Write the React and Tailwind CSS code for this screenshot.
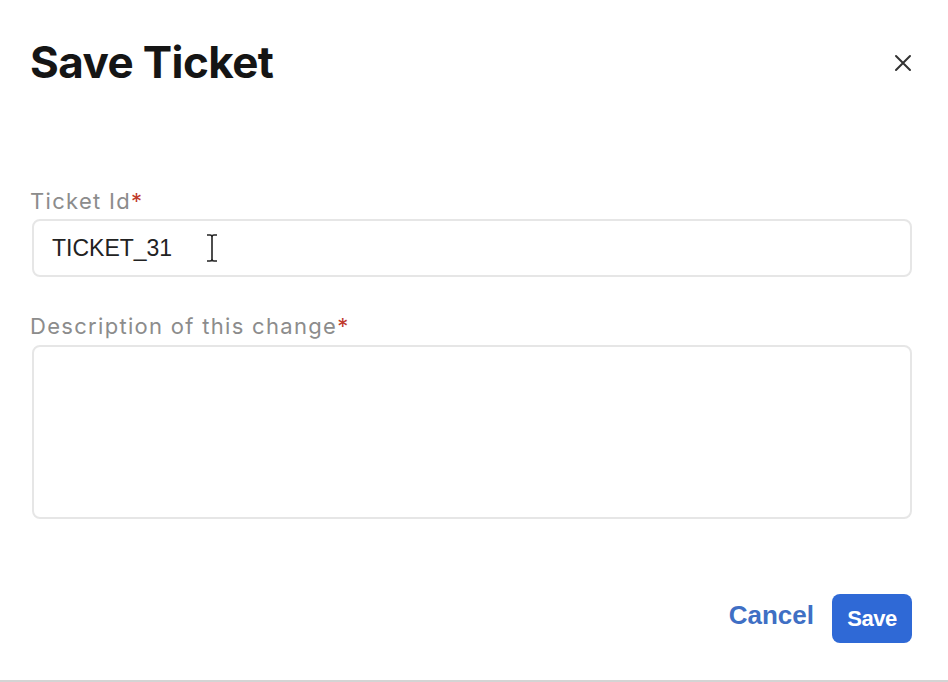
export default function App() {
  return (
    <div className="w-[948px] h-[682px] bg-white relative overflow-hidden border-b-2 border-[#d4d4d4]" style={{ fontFamily: "Inter, 'Liberation Sans', sans-serif" }}>
      <div className="flex items-center justify-between pl-[30px] pr-[36px] pt-[36px]">
        <h1 className="text-[44px] font-bold leading-[52px] text-[#151515] tracking-[-0.6px]">Save Ticket</h1>
        <svg width="18" height="18" viewBox="0 0 18 18" className="mt-[1px]">
          <path d="M2 2 L16 16 M16 2 L2 16" stroke="#333" strokeWidth="2" strokeLinecap="round" />
        </svg>
      </div>
      <div className="px-[32px] pt-[100px]">
        <div className="text-[22px] leading-[26px] text-[#8c8c8c] -ml-[2px] tracking-[1.3px]">
          Ticket Id<span className="text-[#c0392b]">*</span>
        </div>
        <div className="mt-[5px] h-[58px] w-[880px] rounded-[8px] border-2 border-[#e6e6e6] flex items-center pl-[18px]">
          <span className="text-[23px] text-[#222]" style={{ fontFamily: "'Liberation Sans', Arial, sans-serif" }}>TICKET_31</span>
          <span className="ml-[34px] leading-none">
            <svg width="12" height="28" viewBox="0 0 12 28">
              <path d="M1 1 H4 Q6 1 6 3 V25 Q6 27 4 27 H1 M11 1 H8 Q6 1 6 3 M6 25 Q6 27 8 27 H11" stroke="#222" strokeWidth="1.6" fill="none" />
            </svg>
          </span>
        </div>
        <div className="mt-[36px] text-[22px] leading-[26px] text-[#8c8c8c] -ml-[2px] tracking-[1.3px]">
          Description of this change<span className="text-[#c0392b]">*</span>
        </div>
        <div className="mt-[6px] h-[174px] w-[880px] rounded-[8px] border-2 border-[#e6e6e6]"></div>
      </div>
      <div className="flex items-center justify-end gap-[18px] pr-[36px] mt-[75px]">
        <span className="text-[26px] font-bold text-[#3f6fc4] mb-[6px]" style={{ fontFamily: "'Liberation Sans', Arial, sans-serif" }}>Cancel</span>
        <div className="h-[49px] w-[80px] rounded-[8px] bg-[#2f69d6] flex items-center justify-center">
          <span className="text-[22px] font-bold text-white tracking-[-0.5px]" style={{ fontFamily: "'Liberation Sans', Arial, sans-serif" }}>Save</span>
        </div>
      </div>
    </div>
  );
}
